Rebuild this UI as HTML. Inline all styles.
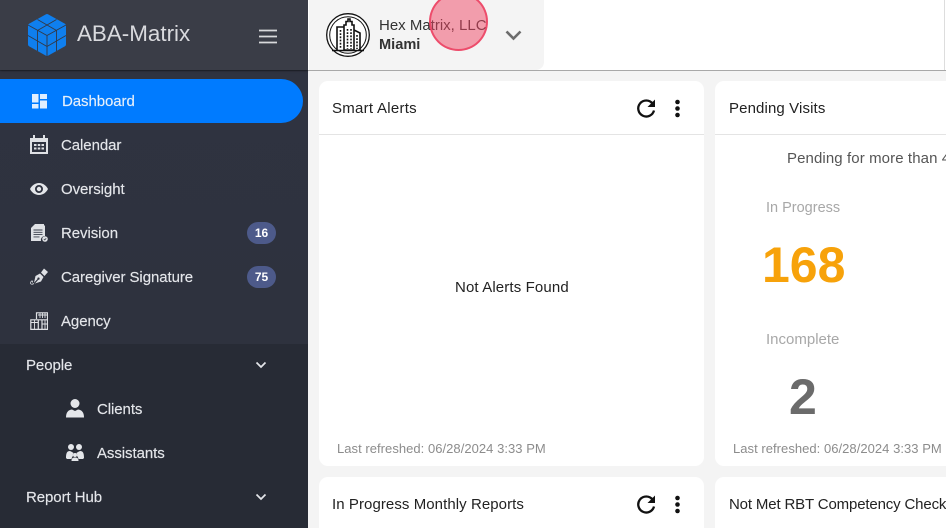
<!DOCTYPE html>
<html style="width:946px;height:528px;overflow:hidden"><head><meta charset="utf-8">
<style>
html,body{margin:0;padding:0}
body{width:946px;height:528px;overflow:hidden;background:#f4f4f4;position:relative;font-family:"Liberation Sans",sans-serif}
#wrap{position:absolute;left:0;top:0;width:946px;height:528px;overflow:hidden}
.a{position:absolute;white-space:nowrap}
svg{position:absolute;display:block}
#side{position:absolute;left:0;top:0;width:308px;height:528px;background:#272b35}
#sidetop{position:absolute;left:0;top:0;width:308px;height:70px;background:#3a3d47;box-shadow:0 1px 2px rgba(0,0,0,.35)}
#sidemid{position:absolute;left:0;top:71px;width:308px;height:273px;background:linear-gradient(#2f3340,#2e323e)}
.m{color:#e4e6ea;font-size:15px;line-height:18px;font-weight:400;letter-spacing:-.07px;-webkit-text-stroke:.15px #e4e6ea}
.bdg{position:absolute;left:247px;width:29px;height:22px;border-radius:11px;background:#4d5a8a;color:#fff;font-size:12px;font-weight:700;line-height:22px;text-align:center}
.card{position:absolute;background:#fff;border-radius:9px}
.t{color:#222;font-size:15px;line-height:18px}
.ref{color:#8c8c8c;font-size:13px;line-height:16px;letter-spacing:.04px}
</style></head><body><div id="wrap">
<div id="side"></div><div id="sidemid"></div><div id="sidetop"></div>

<!-- logo -->
<svg style="left:27px;top:13px" width="40" height="44" viewBox="0 0 40 44">
<path d="M20 3L37 12.500V31.500L20 41 3 31.500V12.500z" fill="#0f7fee" stroke="#0f7fee" stroke-width="4" stroke-linejoin="round"/>
<path d="M1 12L20 22.500 39 12M20 22.500V44M10.500 6.500L29.500 17.500M29.500 6.500L10.500 17.500M10.500 17.500V38M29.500 17.500V38M1 22.500L20 33.500 39 22.500" fill="none" stroke="#333845" stroke-width=".9"/>
</svg>
<div class="a" style="left:77px;top:19px;color:#d9dade;font-size:22.400px;line-height:30px">ABA-Matrix</div>
<svg style="left:259px;top:29px" width="18" height="15"><path d="M0 1.500h18M0 7.500h18M0 13.500h18" stroke="#d8d9dc" stroke-width="1.700"/></svg>

<!-- active -->
<div style="position:absolute;left:0;top:79px;width:303px;height:44px;background:#007bff;border-radius:0 22px 22px 0"></div>
<svg style="left:32px;top:94px" width="15" height="15" fill="#dfeeff"><rect width="6.500" height="8.500"/><rect x="8" width="7" height="5"/><rect y="10" width="6.500" height="4.500"/><rect x="8" y="6.500" width="7" height="8"/></svg>
<div class="a m" style="left:62px;top:93px;color:#e6f2ff">Dashboard</div>

<!-- calendar -->
<svg style="left:30px;top:135px" width="18" height="19" viewBox="0 0 18 19" fill="#dfe1e5"><path d="M0 3h3V0h2v3h8V0h2v3h3v16H0zM2 7v10h14V7z"/><path d="M4 9h2.500v2H4zM7.750 9h2.500v2h-2.500zM11.500 9H14v2h-2.500zM4 12.500h2.500v2H4zM7.750 12.500h2.500v2h-2.500zM11.500 12.500H14v2h-2.500z"/></svg>
<div class="a m" style="left:61px;top:137px">Calendar</div>

<!-- eye -->
<svg style="left:30px;top:183px" width="18" height="12" viewBox="0 0 18 12"><path fill-rule="evenodd" fill="#e4e6ea" d="M9 0c4 0 7.300 2.500 9 6-1.700 3.500-5 6-9 6S1.700 9.500 0 6c1.700-3.500 5-6 9-6zm0 2a4 4 0 100 8 4 4 0 000-8z"/><circle cx="9" cy="6" r="2.200" fill="#e4e6ea"/></svg>
<div class="a m" style="left:61px;top:181px">Oversight</div>

<!-- revision -->
<svg style="left:30px;top:224px" width="18" height="18" viewBox="0 0 18 18"><path fill="#dfe1e5" d="M5 0h9v1.500h1V12a4 4 0 00-4 5H1V4z"/><path d="M3.500 6h9M3.500 8.300h9M3.500 10.600h9M3.500 12.900h6" stroke="#3a3f4c" stroke-width=".9"/><circle cx="15" cy="15" r="2.800" fill="#dfe1e5"/><path d="M13.800 15l1 1 1.400-1.800" fill="none" stroke="#2f3340" stroke-width=".7"/></svg>
<div class="a m" style="left:61px;top:225px">Revision</div>
<div class="bdg" style="top:222px">16</div>

<!-- signature -->
<svg style="left:30px;top:268px" width="18" height="17" viewBox="0 0 18 17"><path fill="#dfe1e5" d="M5.500 8L10 5.500l3.500 3.500-2.500 4.500L5 15.500l3.300-3.800a1.100 1.100 0 10-.8-.7L4 14.700z"/><path fill="#dfe1e5" d="M11 4.500L14 .5 18 4l-3.500 4z"/><path d="M4 15.500c-2.500 1.500-4 .5-3.200-1.500.6-1.500 2.400-1.500 1.700.5" fill="none" stroke="#dfe1e5" stroke-width=".8"/></svg>
<div class="a m" style="left:61px;top:269px">Caregiver Signature</div>
<div class="bdg" style="top:266px">75</div>

<!-- agency -->
<svg style="left:30px;top:312px" width="18" height="18" viewBox="0 0 18 18" fill="none" stroke="#dfe1e5" stroke-width="1.200"><path d="M6.500 7V.8h11v16.600H.8V7.800h7.500v9.600M8.300 7.800h9M12 17.400v-9"/><path d="M1 10.500h7M4.500 8v9M12.500 12h5M15 8v9M8 3h9M10 1v5M12.500 1v5M15 1v5" stroke-width=".9"/></svg>
<div class="a m" style="left:61px;top:313px">Agency</div>

<!-- people -->
<div class="a m" style="left:26px;top:357px">People</div>
<svg style="left:255px;top:361px" width="12" height="8"><path d="M1.500 1.500L6 6l4.500-4.500" fill="none" stroke="#e4e6ea" stroke-width="1.700"/></svg>
<svg style="left:66px;top:399px" width="18" height="19" viewBox="0 0 18 19" fill="#e4e6ea"><circle cx="9" cy="4.500" r="4.500"/><path d="M0 18.500c0-5 2-7.500 6-8l3 1.500 3-1.500c4 .5 6 3 6 8z"/></svg>
<div class="a m" style="left:97px;top:401px">Clients</div>
<svg style="left:66px;top:444px" width="18" height="17" viewBox="0 0 18 17" fill="#e4e6ea"><circle cx="5" cy="3" r="3"/><circle cx="13" cy="3" r="3"/><path d="M0 14c0-5 1-7 4-7l2 1 1.500 1a3.500 3.500 0 00-.5 3c-.5.500-1 1-1.500 3H1zM18 14c0-5-1-7-4-7l-2 1-1.500 1a3.500 3.500 0 01.5 3c.5.500 1 1 1.500 3H17z"/><circle cx="9" cy="11" r="2"/><path d="M5.500 17c0-2.500 1-3.500 3.500-3.500s3.500 1 3.500 3.500z"/></svg>
<div class="a m" style="left:97px;top:445px">Assistants</div>
<div class="a m" style="left:26px;top:489px">Report Hub</div>
<svg style="left:255px;top:493px" width="12" height="8"><path d="M1.500 1.500L6 6l4.500-4.500" fill="none" stroke="#e4e6ea" stroke-width="1.700"/></svg>

<!-- top bar -->
<div style="position:absolute;left:308px;top:0;width:638px;height:70px;background:#fff;border-bottom:1px solid #a8a8a8"></div>
<div style="position:absolute;left:309px;top:0;width:235px;height:70px;background:#f4f4f4;border-radius:0 0 8px 0"></div>
<div style="position:absolute;left:944px;top:0;width:1px;height:70px;background:#ddd"></div>
<svg style="left:326px;top:13px" width="45" height="45" viewBox="0 0 45 45"><circle cx="22" cy="22" r="21.300" fill="#fff" stroke="#111" stroke-width="1.300"/><circle cx="22" cy="22" r="18.300" fill="none" stroke="#111" stroke-width="1"/>
<path d="M18 37V12h2V8.500h2V6h2v2.500h2V12h2v25zM18 14h-7v23M28 17l6 3v17" fill="none" stroke="#111" stroke-width="1.600"/><path d="M14.500 17v18M21.500 16v20M25 16v20M31 22v14" stroke="#111" stroke-width="1.600" stroke-dasharray="1.800 1.400"/><path d="M6 37.500h32" stroke="#111" stroke-width="1.600"/></svg>
<div class="a" style="left:379px;top:17px;color:#333;font-size:15px;line-height:18px">Hex Matrix, LLC</div>
<div class="a" style="left:379px;top:36px;color:#333;font-size:14.600px;line-height:18px;font-weight:700">Miami</div>
<svg style="left:505px;top:30px" width="17" height="11"><path d="M1.500 1.500L8.500 8.500l7-7" fill="none" stroke="#6c6c6c" stroke-width="2.600"/></svg>
<div style="position:absolute;left:429px;top:-8px;width:55px;height:55px;border-radius:50%;background:rgba(240,70,100,.5);border:2px solid rgba(235,50,85,.75)"></div>

<!-- cards -->
<div class="card" style="left:319px;top:81px;width:385px;height:385px"></div>
<div style="position:absolute;left:319px;top:134px;width:385px;height:1px;background:#e4e4e4"></div>
<div class="a t" style="left:332px;top:100px;letter-spacing:.27px">Smart Alerts</div>
<svg style="left:636px;top:98px" width="21" height="21" viewBox="0 0 21 21"><path d="M16.500 5.500A8 8 0 1018 12.500" fill="none" stroke="#111" stroke-width="2.300"/><path d="M19 1.500v7.500h-7.500z" fill="#111"/></svg>
<svg style="left:674px;top:99px" width="7" height="19" fill="#111"><circle cx="3.500" cy="3" r="2.300"/><circle cx="3.500" cy="9.500" r="2.300"/><circle cx="3.500" cy="16" r="2.300"/></svg>
<div class="a" style="left:455px;top:279px;color:#222;font-size:15px;line-height:18px;letter-spacing:.13px">Not Alerts Found</div>
<div class="a ref" style="left:337px;top:441px">Last refreshed: 06/28/2024 3:33 PM</div>

<div class="card" style="left:715px;top:81px;width:245px;height:385px"></div>
<div style="position:absolute;left:715px;top:134px;width:231px;height:1px;background:#e4e4e4"></div>
<div class="a t" style="left:729px;top:100px;letter-spacing:.12px">Pending Visits</div>
<div class="a" style="left:787px;top:150px;color:#555;font-size:15px;line-height:18px;letter-spacing:.1px">Pending for more than 4</div>
<div class="a" style="left:766px;top:199px;color:#a8a8a8;font-size:14.500px;line-height:18px">In Progress</div>
<div class="a" style="left:762px;top:236px;color:#f7a20a;font-size:50px;line-height:58px;font-weight:700">168</div>
<div class="a" style="left:766px;top:331px;color:#a8a8a8;font-size:15px;line-height:18px">Incomplete</div>
<div class="a" style="left:789px;top:368px;color:#6b6b6b;font-size:50px;line-height:58px;font-weight:700">2</div>
<div class="a ref" style="left:733px;top:441px">Last refreshed: 06/28/2024 3:33 PM</div>

<div class="card" style="left:319px;top:477px;width:385px;height:51px;border-radius:9px 9px 0 0"></div>
<div class="a t" style="left:332px;top:496px;letter-spacing:.07px">In Progress Monthly Reports</div>
<svg style="left:636px;top:494px" width="21" height="21" viewBox="0 0 21 21"><path d="M16.500 5.500A8 8 0 1018 12.500" fill="none" stroke="#111" stroke-width="2.300"/><path d="M19 1.500v7.500h-7.500z" fill="#111"/></svg>
<svg style="left:674px;top:495px" width="7" height="19" fill="#111"><circle cx="3.500" cy="3" r="2.300"/><circle cx="3.500" cy="9.500" r="2.300"/><circle cx="3.500" cy="16" r="2.300"/></svg>
<div class="card" style="left:715px;top:477px;width:231px;height:51px;border-radius:9px 0 0 0"></div>
<div class="a t" style="left:729px;top:496px;letter-spacing:-.15px">Not Met RBT Competency Check</div>
</div></body></html>
